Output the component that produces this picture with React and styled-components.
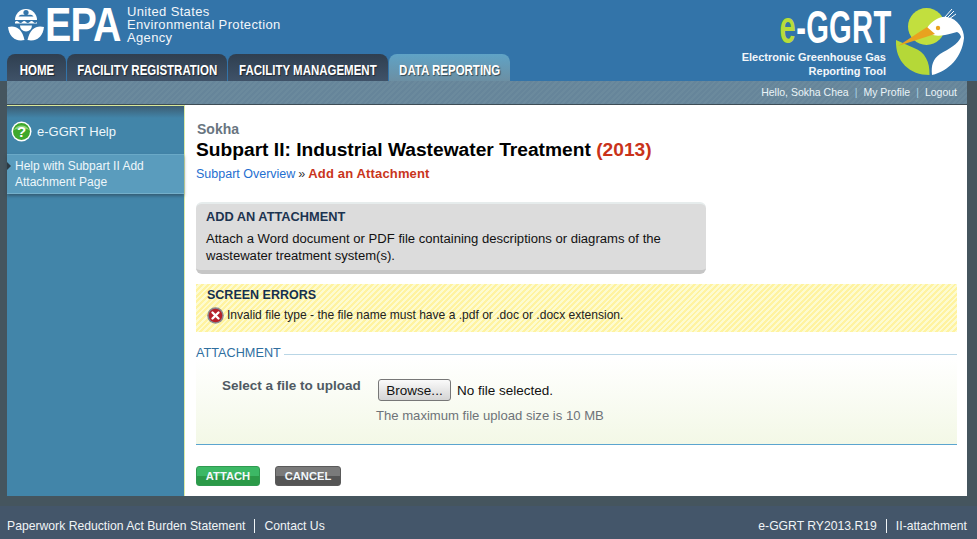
import React from "react";
import styled, { createGlobalStyle } from "styled-components";

const GlobalStyle = createGlobalStyle`
  html, body {
    margin: 0;
    padding: 0;
    background: #45555e;
    font-family: "Liberation Sans", Arial, sans-serif;
  }
  * { box-sizing: border-box; }
`;

const tabs = [
  { label: "HOME", width: 59 },
  { label: "FACILITY REGISTRATION", width: 160 },
  { label: "FACILITY MANAGEMENT", width: 160 },
  { label: "DATA REPORTING", width: 121, active: true }
];

const EpaMark = () => (
  <svg width="38" height="38" viewBox="0 0 38 38">
    <path d="M8 14a11 11 0 1 1 22 0z" fill="#fff" />
    <circle cx="19" cy="6.500" r="2.600" fill="#3374a9" />
    <path d="M11.500 10.500c2-2.500 4-1.600 7.500-1.600s5.500-.9 7.500 1.600z" fill="#3374a9" />
    <path d="M8 16q1.800-2 3.700 0t3.700 0 3.600 0 3.700 0 3.600 0 3.700 0v1.500H8z" fill="#fff" />
    <path d="M1 21c7-2 14 1 16.500 13C8 36 2 30 1 21z" fill="#fff" />
    <path d="M37 21c-7-2-14 1-16.500 13C30 36 36 30 37 21z" fill="#fff" />
    <path d="M13 19.500a6 6 0 0 0 12 0z" fill="#fff" />
  </svg>
);

const BirdLogo = () => (
  <svg width="74" height="72" viewBox="0 0 74 72">
    <circle cx="33.500" cy="19.500" r="18.500" fill="#c2df3e" />
    <path d="M3 33l18 8c11 4 16 14 15.500 27C17 68 2 55 3 33z" fill="#b5d838" />
    <path d="M34 21C40 13 47 9 54 10C65 12 71 22 71 31C69 50 56 64 39 68C38 58 40 52 47 47C56 42 65 37 68 30C67 27 66 26 64 25C60 26 57 27 52 28C46 29 41 29 38 27C36 25 35 23 34 21Z" fill="#fff" />
    <path d="M5 39L34 20L42 27Z" fill="#e9a21f" />
    <circle cx="45" cy="21" r="2.200" fill="#e9a21f" />
    <path d="M52 10l7-8M54 11l7-7M56 12l7-5" stroke="#fff" strokeWidth="1" fill="none" />
  </svg>
);

const HelpIcon = () => (
  <svg width="21" height="21" viewBox="0 0 21 21">
    <circle cx="10.500" cy="10.500" r="10" fill="#fff" />
    <circle cx="10.500" cy="10.500" r="8.500" fill="#3fa82c" />
    <path d="M3 9a8 7 0 0 1 15 0c-4-2-10-2-15 0z" fill="#8fd27a" />
    <text x="10.500" y="15.500" textAnchor="middle" fontFamily="Liberation Sans" fontWeight="700" fontSize="15" fill="#fff">?</text>
  </svg>
);

const ErrorIcon = () => (
  <svg width="17" height="17" viewBox="0 0 17 17">
    <circle cx="8.500" cy="8.500" r="8.300" fill="#8b8b90" />
    <circle cx="8.500" cy="8.500" r="6.800" fill="#b5202a" />
    <path d="M5.500 5.500l6 6M11.500 5.500l-6 6" stroke="#fff" strokeWidth="2.400" strokeLinecap="round" />
  </svg>
);

export default function App() {
  return (
    <Page>
      <GlobalStyle />
      <Header>
        <HeaderLeft>
          <Brand>
            <EpaMark />
            <EpaBox>
              <EpaLetters>EPA</EpaLetters>
            </EpaBox>
            <AgencyName>
              United States
              <br />
              Environmental Protection
              <br />
              Agency
            </AgencyName>
          </Brand>
          <Tabs>
            {tabs.map(tab => (
              <Tab key={tab.label} $width={tab.width} $active={tab.active}>
                <TabLabel>{tab.label}</TabLabel>
              </Tab>
            ))}
          </Tabs>
        </HeaderLeft>
        <ToolLogo>
          <ToolText>
            <ToolNameBox>
              <ToolName>
                <GreenLetter>e</GreenLetter>-GGRT
              </ToolName>
            </ToolNameBox>
            <ToolTagline>
              Electronic Greenhouse Gas
              <br />
              Reporting Tool
            </ToolTagline>
          </ToolText>
          <BirdLogo />
        </ToolLogo>
      </Header>

      <UserBar>
        <UserLink>Hello, Sokha Chea</UserLink>
        <Pipe>|</Pipe>
        <UserLink>My Profile</UserLink>
        <Pipe>|</Pipe>
        <UserLink>Logout</UserLink>
      </UserBar>

      <Main>
        <Sidebar>
          <HelpTitle>
            <HelpIcon />
            e-GGRT Help
          </HelpTitle>
          <HelpItem>Help with Subpart II Add Attachment Page</HelpItem>
        </Sidebar>

        <Content>
          <Owner>Sokha</Owner>
          <Title>
            Subpart II: Industrial Wastewater Treatment <Year>(2013)</Year>
          </Title>
          <Breadcrumb>
            <Crumb>Subpart Overview</Crumb>
            <CrumbSep>»</CrumbSep>
            <CurrentCrumb>Add an Attachment</CurrentCrumb>
          </Breadcrumb>

          <InfoBox>
            <InfoTitle>ADD AN ATTACHMENT</InfoTitle>
            <InfoText>
              Attach a Word document or PDF file containing descriptions or diagrams of the wastewater treatment
              system(s).
            </InfoText>
          </InfoBox>

          <ErrorBox>
            <ErrorTitle>SCREEN ERRORS</ErrorTitle>
            <ErrorRow>
              <ErrorIcon />
              Invalid file type - the file name must have a .pdf or .doc or .docx extension.
            </ErrorRow>
          </ErrorBox>

          <Legend>ATTACHMENT</Legend>
          <FormPanel>
            <FieldLabel>Select a file to upload</FieldLabel>
            <FieldBody>
              <FileRow>
                <BrowseButton type="button">Browse...</BrowseButton>
                No file selected.
              </FileRow>
              <Hint>The maximum file upload size is 10 MB</Hint>
            </FieldBody>
          </FormPanel>

          <Actions>
            <ActionButton type="button" $variant="green">ATTACH</ActionButton>
            <ActionButton type="button">CANCEL</ActionButton>
          </Actions>
        </Content>
      </Main>

      <Footer>
        <FooterGroup>
          <FooterItem>Paperwork Reduction Act Burden Statement</FooterItem>
          <FooterItem>Contact Us</FooterItem>
        </FooterGroup>
        <FooterGroup>
          <FooterItem>e-GGRT RY2013.R19</FooterItem>
          <FooterItem>II-attachment</FooterItem>
        </FooterGroup>
      </Footer>
    </Page>
  );
}

const Page = styled.div`
  width: 977px;
  height: 539px;
  overflow: hidden;
  display: flex;
  flex-direction: column;
  background: #45555e;
`;

const Header = styled.header`
  height: 81px;
  flex: none;
  display: flex;
  justify-content: space-between;
  background: #3374a9;
  padding: 0 7px;
`;

const HeaderLeft = styled.div`
  display: flex;
  flex-direction: column;
  justify-content: space-between;
`;

const Brand = styled.div`
  display: flex;
  align-items: flex-start;
  padding-top: 6px;
  height: 54px;
  svg {
    flex: none;
  }
`;

const EpaBox = styled.div`
  width: 82px;
  flex: none;
`;

const EpaLetters = styled.div`
  width: 100px;
  font-weight: 700;
  font-size: 48px;
  line-height: 37px;
  letter-spacing: -1px;
  color: #fff;
  transform: scaleX(0.82);
  transform-origin: left center;
`;

const AgencyName = styled.div`
  margin-top: -1px;
  font-size: 13px;
  line-height: 13px;
  letter-spacing: 0.35px;
  white-space: nowrap;
  color: #f2f6fa;
`;

const Tabs = styled.nav`
  display: flex;
  gap: 1px;
  height: 27px;
`;

const Tab = styled.div`
  width: ${p => p.$width}px;
  flex: none;
  border-radius: 8px 8px 0 0;
  display: flex;
  align-items: center;
  justify-content: center;
  padding-top: 4px;
  background: ${p =>
    p.$active
      ? "linear-gradient(#5fa3c6, #6c8fa3)"
      : "linear-gradient(#2f3f50, #3f5268)"};
`;

const TabLabel = styled.span`
  flex: none;
  white-space: nowrap;
  font-weight: 700;
  font-size: 14px;
  color: #fff;
  text-shadow: 1px 1px 1px rgba(0, 0, 0, 0.5);
  transform: scaleX(0.82);
`;

const ToolLogo = styled.div`
  display: flex;
  align-items: flex-start;
  margin-right: 3px;
  padding-top: 7px;
`;

const ToolText = styled.div`
  display: flex;
  flex-direction: column;
  align-items: flex-end;
  margin-right: 1px;
`;

const ToolNameBox = styled.div`
  width: 112px;
  height: 40px;
  display: flex;
  justify-content: flex-end;
`;

const ToolName = styled.div`
  flex: none;
  font-weight: 700;
  font-size: 47px;
  line-height: 40px;
  letter-spacing: 0.5px;
  color: #fff;
  transform: scaleX(0.62);
  transform-origin: right center;
`;

const GreenLetter = styled.span`
  color: #b8dc3a;
`;

const ToolTagline = styled.div`
  font-size: 11px;
  font-weight: 700;
  line-height: 14px;
  text-align: right;
  white-space: nowrap;
  color: #f2f6fa;
  margin: 3px 6px 0 0;
`;

const UserBar = styled.div`
  height: 24px;
  flex: none;
  margin: 0 10px 0 7px;
  padding: 0 10px 2px 0;
  display: flex;
  align-items: center;
  justify-content: flex-end;
  gap: 6px;
  font-size: 10.500px;
  color: #eaf4f8;
  background: repeating-linear-gradient(135deg, #6b8a9d 0 2px, #66859a 2px 4px);
  border-bottom: 1px solid #3d4c55;
`;

const UserLink = styled.span``;

const Pipe = styled.span`
  color: #a9d3e6;
`;

const Main = styled.main`
  height: 391px;
  flex: none;
  margin: 0 10px 0 7px;
  display: flex;
  background: #fff;
`;

const Sidebar = styled.aside`
  width: 178px;
  flex: none;
  padding-top: 2px;
  background: linear-gradient(#3c5c72 0, #4285a9 12px);
  border-top: 1px solid #d9e89a;
  border-right: 1px solid #dbe9a6;
`;

const HelpTitle = styled.div`
  height: 46px;
  display: flex;
  align-items: center;
  gap: 5px;
  padding-left: 4px;
  font-size: 13px;
  color: #eef7fb;
`;

const HelpItem = styled.div`
  position: relative;
  height: 40px;
  padding: 3px 20px 0 8px;
  font-size: 12px;
  line-height: 16px;
  color: #eef7fb;
  background: #5a9cbd;
  border-top: 1px solid #6aa9c7;
  border-bottom: 1px solid #75afca;
  box-shadow: 0 2px 3px rgba(40, 60, 75, 0.55);
  &::before {
    content: "";
    position: absolute;
    left: 0;
    top: 7px;
    border-left: 4px solid #2b3a44;
    border-top: 4px solid transparent;
    border-bottom: 4px solid transparent;
  }
`;

const Content = styled.section`
  flex: 1;
  padding: 16px 10px 0 11px;
`;

const Owner = styled.div`
  font-size: 14px;
  font-weight: 700;
  line-height: 17px;
  padding-left: 1px;
  color: #69757f;
`;

const Title = styled.h1`
  margin: 0;
  font-size: 19.200px;
  font-weight: 700;
  line-height: 24px;
  color: #000;
`;

const Year = styled.span`
  color: #c9321a;
`;

const Breadcrumb = styled.div`
  margin-top: 3px;
  display: flex;
  align-items: center;
  gap: 3px;
  font-size: 12.500px;
  line-height: 18px;
`;

const Crumb = styled.span`
  color: #1f6fd0;
`;

const CrumbSep = styled.span`
  color: #333;
`;

const CurrentCrumb = styled.span`
  font-size: 13px;
  font-weight: 700;
  letter-spacing: 0.15px;
  color: #c9351c;
`;

const InfoBox = styled.div`
  width: 510px;
  height: 72px;
  margin-top: 19px;
  padding: 5px 10px 0;
  border-radius: 6px;
  background: #dcdcdc;
  border-top: 2px solid #e6ecec;
  border-bottom: 4px solid #c6c6c6;
`;

const InfoTitle = styled.div`
  font-size: 12.800px;
  line-height: 16px;
  font-weight: 700;
  color: #1c3350;
`;

const InfoText = styled.div`
  margin-top: 6px;
  font-size: 13.080px;
  line-height: 16.500px;
  color: #111;
`;

const ErrorBox = styled.div`
  height: 48px;
  margin-top: 10px;
  padding: 3px 11px 0;
  background: repeating-linear-gradient(135deg, #fff3a0 0 2px, #fdfbd0 2px 4px);
`;

const ErrorTitle = styled.div`
  font-size: 12.500px;
  line-height: 16px;
  font-weight: 700;
  color: #15304e;
`;

const ErrorRow = styled.div`
  margin-top: 4px;
  display: flex;
  align-items: center;
  gap: 3px;
  font-size: 12.050px;
  line-height: 17px;
  color: #222;
`;

const Legend = styled.div`
  margin-top: 14px;
  height: 13px;
  display: flex;
  align-items: center;
  gap: 3px;
  font-size: 12.700px;
  color: #2f6f9f;
  &::after {
    content: "";
    flex: 1;
    height: 1px;
    margin-top: 3px;
    background: #b9d6e6;
  }
`;

const FormPanel = styled.div`
  height: 86px;
  padding: 18px 0 0 26px;
  display: flex;
  background: linear-gradient(#fff, #f3f8e6);
  border-bottom: 1px solid #5ba5cf;
`;

const FieldLabel = styled.div`
  width: 156px;
  font-size: 13.500px;
  font-weight: 700;
  line-height: 18px;
  color: #4f5a63;
`;

const FieldBody = styled.div`
  display: flex;
  flex-direction: column;
  padding-top: 2px;
`;

const FileRow = styled.div`
  display: flex;
  align-items: center;
  gap: 6px;
  font-size: 13.500px;
  color: #111;
`;

const BrowseButton = styled.button`
  width: 73px;
  height: 22px;
  padding: 0;
  font-family: inherit;
  font-size: 13.500px;
  color: #111;
  border: 1px solid #777;
  border-radius: 3px;
  background: linear-gradient(#fafafa, #d4d4d4);
`;

const Hint = styled.div`
  margin: 7px 0 0 -2px;
  font-size: 13.100px;
  line-height: 16px;
  color: #6e7379;
`;

const Actions = styled.div`
  margin-top: 21px;
  display: flex;
  gap: 15px;
`;

const ActionButton = styled.button`
  width: ${p => (p.$variant === "green" ? 64 : 66)}px;
  height: 20px;
  padding: 0;
  font-family: inherit;
  font-size: 11.200px;
  font-weight: 700;
  color: #f3f8fc;
  border: 1px solid ${p => (p.$variant === "green" ? "#2f9a50" : "#5a5a5a")};
  border-radius: 3px;
  background: ${p =>
    p.$variant === "green"
      ? "linear-gradient(#3cb865 0 50%, #2b9a48 50% 100%)"
      : "linear-gradient(#7a7a7a 0 50%, #555 50% 100%)"};
`;

const Footer = styled.footer`
  margin-top: 10px;
  flex: 1;
  padding: 6px 10px 0 7px;
  display: flex;
  align-items: center;
  justify-content: space-between;
  background: #44566a;
`;

const FooterGroup = styled.div`
  display: flex;
`;

const FooterItem = styled.span`
  font-size: 12.200px;
  line-height: 14px;
  color: #f0f4f6;
  & + & {
    margin-left: 9px;
    padding-left: 9px;
    border-left: 1px solid #f0f4f6;
  }
`;
